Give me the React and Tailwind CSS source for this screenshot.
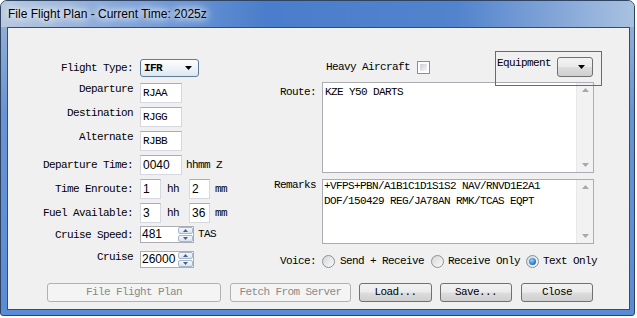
import React from "react";

const mono = "font-[family-name:Liberation_Mono,Courier_New,monospace] text-[11px] tracking-[-0.6px] whitespace-pre";
const sans = "font-[family-name:Liberation_Sans,Arial,sans-serif] text-[12px]";
const btn =
  "h-[19px] rounded-[3px] border border-[#707070] bg-[linear-gradient(to_bottom,#f2f2f2_0%,#ebebeb_48%,#dddddd_52%,#cfcfcf_100%)] flex items-center justify-center text-black";
const btnOff =
  "h-[19px] rounded-[3px] border border-[#adb2b5] bg-[#f4f4f4] flex items-center justify-center text-[#8a8a8a]";
const box = "h-[20px] bg-white border border-[#d5d8de] border-t-[#abadb3] flex items-center";

function Arrow({ up }) {
  return (
    <svg width="7" height="4" viewBox="0 0 7 4">
      <path d={up ? "M0 4L3.5 0L7 4Z" : "M0 0L7 0L3.5 4Z"} fill="#000" />
    </svg>
  );
}

function Spin({ value }) {
  return (
    <div className="w-[54px] h-[17px] bg-white border border-[#abadb3] flex items-stretch">
      <span className={`${sans} flex-1 pl-[1px] leading-[15px]`}>{value}</span>
      <div className="w-[15px] flex flex-col gap-[1px]">
        {[true, false].map((u) => (
          <div
            key={u ? "u" : "d"}
            className="flex-1 rounded-[2px] border border-[#a6b6cb] bg-[linear-gradient(to_bottom,#f4f8fc,#d9e4f1)] flex items-center justify-center"
          >
            <svg width="5" height="3" viewBox="0 0 5 3">
              <path d={u ? "M0 3L2.5 0L5 3Z" : "M0 0L5 0L2.5 3Z"} fill="#4a5f82" />
            </svg>
          </div>
        ))}
      </div>
    </div>
  );
}

function Scroll() {
  return (
    <div className="w-[17px] bg-[#f2f2f2] border-l border-[#e8e8e8] flex flex-col justify-between items-center py-[5px]">
      <svg width="7" height="4" viewBox="0 0 7 4">
        <path d="M0 4L3.5 0L7 4Z" fill="#a8a8a8" />
      </svg>
      <svg width="7" height="4" viewBox="0 0 7 4">
        <path d="M0 0L7 0L3.5 4Z" fill="#a8a8a8" />
      </svg>
    </div>
  );
}

function Radio({ on }) {
  return (
    <div className="w-[13px] h-[13px] rounded-full border border-[#8e8f8f] bg-[linear-gradient(to_bottom_right,#d4d6da,#fbfbfb)] flex items-center justify-center">
      {on && (
        <div className="w-[7px] h-[7px] rounded-full bg-[radial-gradient(circle_at_40%_35%,#8fd3ff,#1e6fc4_70%,#0f3f7a)]" />
      )}
    </div>
  );
}

function Row({ label, top, children, center }) {
  return (
    <div className={`flex ${center ? "items-center" : "items-start"} ${top}`}>
      <span className={`${mono} w-[125px] text-right leading-[12px]`}>{label}</span>
      <div className="ml-[7px] flex items-center">{children}</div>
    </div>
  );
}

export default function App() {
  return (
    <div className="w-[637px] h-[318px] bg-white overflow-hidden text-black">
      <div className="w-[635px] h-[316px] rounded-t-[7px] rounded-b-[3px] border border-[#2f4463] bg-[linear-gradient(to_bottom,#9fb5d6_0%,#6994d4_35%,#5a8bd6_100%)] flex flex-col overflow-hidden">
        <div className="h-[26px] pl-[7px] flex items-center bg-[linear-gradient(to_right,#b8c9df_0%,#7fa3d9_20%,#4a7dcb_42%,#5283cd_72%,#a9c1e0_100%)]">
          <span className={`${sans} text-black [text-shadow:0_0_6px_#fff,0_0_10px_#fff,0_0_14px_#fff]`}>
            File Flight Plan - Current Time: 2025z
          </span>
        </div>
        <div className="flex-1 pl-[6px] pr-[4px] pb-[5px] flex">
          <div className="flex-1 relative border border-[#3a4b63] bg-[#f0f0f0] flex flex-col">
            <div className="flex h-[240px] pt-[31px]">
              {/* left column */}
              <div className="w-[254px] flex flex-col">
                <Row label="Flight Type:" center>
                  <div className="w-[59px] h-[18px] rounded-[3px] border border-[#5d7c9c] bg-[linear-gradient(to_bottom,#fdfdfd_0%,#eef3f8_50%,#dde6ef_100%)] flex items-center justify-between pl-[3px] pr-[6px]">
                    <span className={`${mono} font-bold`}>IFR</span>
                    <Arrow />
                  </div>
                </Row>
                <Row label="Departure" top="mt-[6px]">
                  <div className={`${box} w-[42px] pl-[2px]`}>
                    <span className={mono}>RJAA</span>
                  </div>
                </Row>
                <Row label="Destination" top="mt-[4px]">
                  <div className={`${box} w-[42px] pl-[2px]`}>
                    <span className={mono}>RJGG</span>
                  </div>
                </Row>
                <Row label="Alternate" top="mt-[4px]">
                  <div className={`${box} w-[42px] pl-[2px]`}>
                    <span className={mono}>RJBB</span>
                  </div>
                </Row>
                <Row label="Departure Time:" top="mt-[4px]" center>
                  <div className={`${box} w-[42px] pl-[2px]`}>
                    <span className={sans}>0040</span>
                  </div>
                  <span className={`${mono} ml-[4px]`}>hhmm Z</span>
                </Row>
                <Row label="Time Enroute:" top="mt-[4px]" center>
                  <div className={`${box} w-[21px] pl-[2px]`}>
                    <span className={sans}>1</span>
                  </div>
                  <span className={`${mono} ml-[6px]`}>hh</span>
                  <div className={`${box} w-[21px] pl-[2px] ml-[10px]`}>
                    <span className={sans}>2</span>
                  </div>
                  <span className={`${mono} ml-[5px]`}>mm</span>
                </Row>
                <Row label="Fuel Available:" top="mt-[4px]" center>
                  <div className={`${box} w-[21px] pl-[2px]`}>
                    <span className={sans}>3</span>
                  </div>
                  <span className={`${mono} ml-[6px]`}>hh</span>
                  <div className={`${box} w-[21px] pl-[2px] ml-[10px]`}>
                    <span className={sans}>36</span>
                  </div>
                  <span className={`${mono} ml-[5px]`}>mm</span>
                </Row>
                <Row label="Cruise Speed:" top="mt-[3px]" center>
                  <Spin value="481" />
                  <span className={`${mono} ml-[4px]`}>TAS</span>
                </Row>
                <Row label="Cruise" top="mt-[8px]">
                  <Spin value="26000" />
                </Row>
              </div>

              {/* right column */}
              <div className="flex-1 flex flex-col">
                <div className="h-[16px] flex items-center pl-[64px]">
                  <span className={mono}>Heavy Aircraft</span>
                  <div className="ml-[7px] w-[13px] h-[13px] border border-[#8e8f8f] bg-white p-[2px]">
                    <div className="w-full h-full bg-[linear-gradient(to_bottom_right,#cbcfd5,#f7f7f7)]" />
                  </div>
                </div>
                <div className="flex mt-[7px]">
                  <span className={`${mono} w-[54px] text-right leading-[12px] pt-[4px]`}>Route:</span>
                  <div className="ml-[6px] w-[272px] h-[91px] bg-white border border-[#abadb3] flex">
                    <div className={`${mono} flex-1 pl-[2px] pt-[2px] leading-[15px]`}>KZE Y50 DARTS</div>
                    <Scroll />
                  </div>
                </div>
                <div className="flex mt-[6px]">
                  <span className={`${mono} w-[54px] text-right leading-[12px]`}>Remarks</span>
                  <div className="ml-[6px] w-[272px] h-[65px] bg-white border border-[#abadb3] flex">
                    <div className={`${mono} flex-1 pl-[1px] leading-[15px] -mt-[1px]`}>
                      {"+VFPS+PBN/A1B1C1D1S1S2 NAV/RNVD1E2A1\nDOF/150429 REG/JA78AN RMK/TCAS EQPT"}
                    </div>
                    <Scroll />
                  </div>
                </div>
                <div className="flex items-center mt-[11px] h-[13px]">
                  <span className={`${mono} w-[54px] text-right`}>Voice:</span>
                  <div className="ml-[6px]">
                    <Radio />
                  </div>
                  <span className={`${mono} ml-[5px]`}>Send + Receive</span>
                  <div className="ml-[7px]">
                    <Radio />
                  </div>
                  <span className={`${mono} ml-[4px]`}>Receive Only</span>
                  <div className="ml-[6px]">
                    <Radio on />
                  </div>
                  <span className={`${mono} ml-[4px]`}>Text Only</span>
                </div>
              </div>
            </div>

            <div className="flex mt-[15px] ml-[39px]">
              <div className={`${btnOff} w-[174px]`}>
                <span className={mono}>File Flight Plan</span>
              </div>
              <div className={`${btnOff} w-[121px] ml-[9px]`}>
                <span className={mono}>Fetch From Server</span>
              </div>
              <div className={`${btn} w-[73px] ml-[8px]`}>
                <span className={mono}>Load...</span>
              </div>
              <div className={`${btn} w-[72px] ml-[8px]`}>
                <span className={mono}>Save...</span>
              </div>
              <div className={`${btn} w-[72px] ml-[9px]`}>
                <span className={mono}>Close</span>
              </div>
            </div>

            {/* annotation box */}
            <div className="absolute left-[487px] top-[23px] w-[107px] h-[35px] ring-1 ring-inset ring-[#e8333a]">
              <span className={`${mono} absolute left-[2px] top-[6px] leading-[12px]`}>Equipment</span>
              <div className="absolute left-[62px] top-[6px] w-[36px] h-[20px] rounded-[3px] border border-[#707070] bg-[linear-gradient(to_bottom,#f2f2f2_0%,#ebebeb_48%,#dddddd_52%,#cfcfcf_100%)] flex items-center justify-end pr-[7px]">
                <Arrow />
              </div>
            </div>
          </div>
        </div>
      </div>
    </div>
  );
}
